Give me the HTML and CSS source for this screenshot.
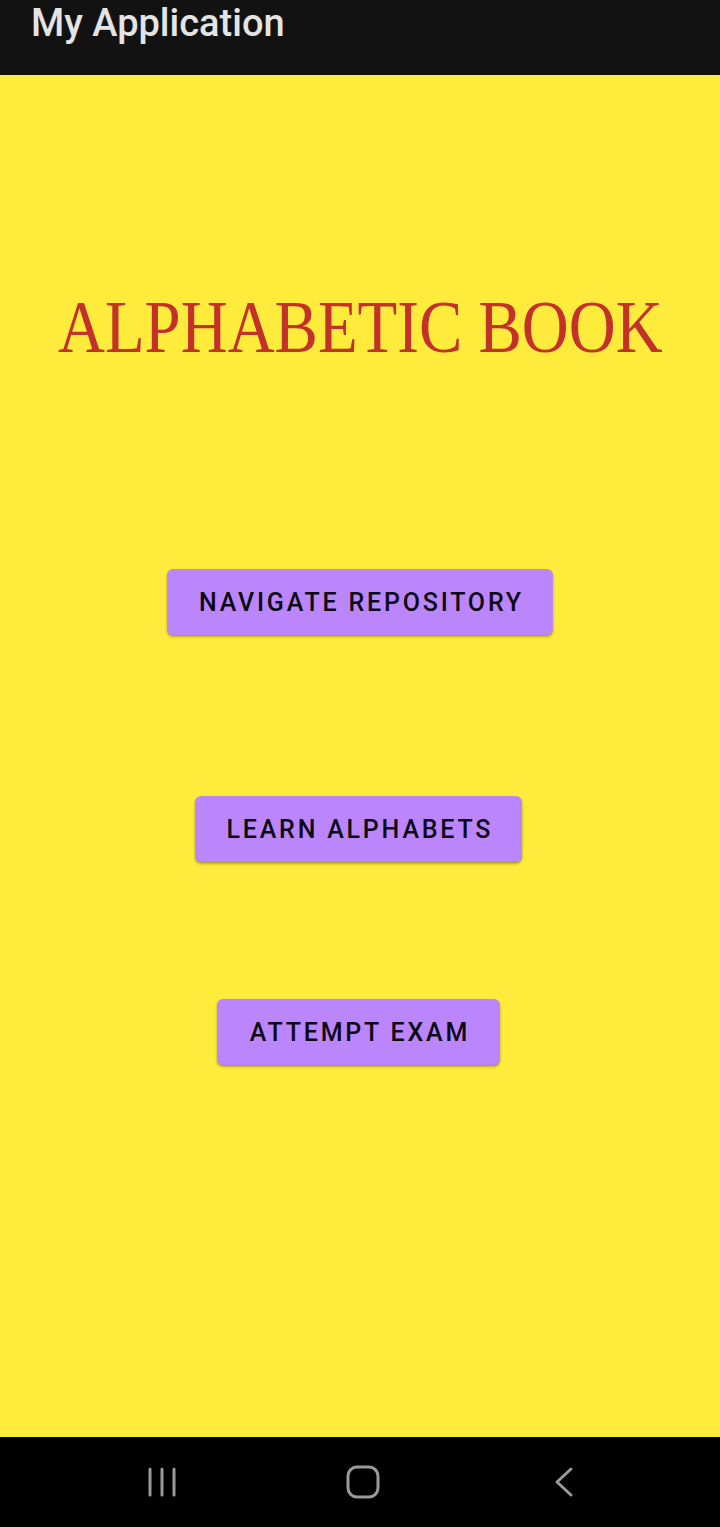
FILE: index.html
```html
<!DOCTYPE html>
<html>
<head>
<meta charset="utf-8">
<link rel="stylesheet" href="styles.css">
</head>
<body>
<div class="app">
  <header class="appbar"><span class="appbar-title">My Application</span></header>
  <main class="content">
    <h1 class="title">ALPHABETIC BOOK</h1>
    <button class="btn btn-1">NAVIGATE REPOSITORY</button>
    <button class="btn btn-2">LEARN ALPHABETS</button>
    <button class="btn btn-3">ATTEMPT EXAM</button>
  </main>
  <nav class="navbar">
    <svg class="nav-icon recents" width="32" height="32" viewBox="0 0 32 32"><g stroke="#9a9a9a" stroke-width="3" stroke-linecap="round" fill="none"><line x1="4" y1="3" x2="4" y2="29"/><line x1="16" y1="3" x2="16" y2="29"/><line x1="28" y1="3" x2="28" y2="29"/></g></svg>
    <svg class="nav-icon home" width="34" height="34" viewBox="0 0 34 34"><rect x="2" y="2" width="30" height="30" rx="9" ry="9" stroke="#9a9a9a" stroke-width="3" fill="none"/></svg>
    <svg class="nav-icon back" width="22" height="32" viewBox="0 0 22 32"><polyline points="18,3 4,16 18,29" stroke="#9a9a9a" stroke-width="3" stroke-linecap="round" stroke-linejoin="round" fill="none"/></svg>
  </nav>
</div>
</body>
</html>
```
FILE: styles.css
```css
html, body {
  margin: 0;
  padding: 0;
}
body {
  width: 720px;
  height: 1527px;
  overflow: hidden;
  font-family: Roboto, "Liberation Sans", sans-serif;
}
.app {
  display: flex;
  flex-direction: column;
  height: 1527px;
}
.appbar {
  height: 75px;
  background: #121212;
  box-sizing: border-box;
  padding: 4px 0 0 31px;
  flex: none;
}
.appbar-title {
  display: block;
  color: #e4e4e4;
  font-size: 38px;
  font-weight: 500;
  line-height: 38px;
}
.content {
  height: 1362px;
  flex: none;
  background: #ffeb3b;
  display: flex;
  flex-direction: column;
  align-items: center;
}
.title {
  margin: 215px 0 0 0;
  font-family: "Liberation Serif", serif;
  font-weight: normal;
  font-size: 74px;
  line-height: 74px;
  color: #c3312a;
  white-space: nowrap;
  transform: scaleX(0.878);
}
.btn {
  height: 66px;
  border: none;
  border-radius: 6px;
  background: #bb86fc;
  color: #0c0716;
  font-family: Roboto, sans-serif;
  font-weight: 500;
  font-size: 25px;
  letter-spacing: 2.8px;
  padding: 0 0 0 2.8px;
  box-shadow: 0 2px 3px rgba(0,0,0,0.25), 0 1px 1px rgba(0,0,0,0.15);
}
.btn-1 { margin-top: 205px; width: 386px; }
.btn-2 { margin-top: 161px; width: 327px; margin-right: 3px; }
.btn-3 { margin-top: 137px; width: 283px; margin-right: 3px; }
.navbar {
  height: 90px;
  flex: none;
  background: #000;
  position: relative;
}
.nav-icon {
  position: absolute;
}
.recents { left: 146px; top: 29px; }
.home { left: 346px; top: 28px; }
.back { left: 553px; top: 29px; }
```
